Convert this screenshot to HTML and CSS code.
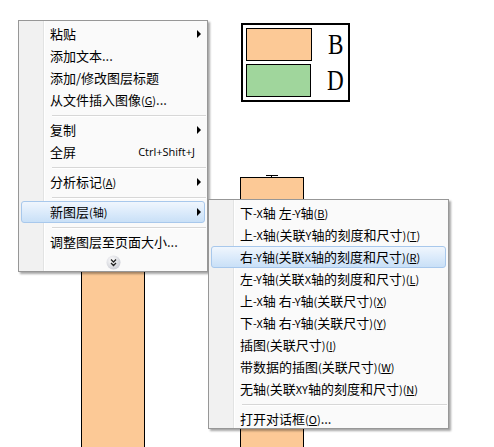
FILE: index.html
```html
<!DOCTYPE html>
<html>
<head>
<meta charset="utf-8">
<link rel="stylesheet" href="styles.css">
</head>
<body>
<div class="stage">
  <div class="legend">
    <div class="lg-row"><span class="sw sw-orange"></span><span class="lg-label">B</span></div>
    <div class="lg-row"><span class="sw sw-green"></span><span class="lg-label">D</span></div>
  </div>
  <div class="bar bar-left"></div>
  <div class="bar bar-right"><span class="errcap"></span></div>

  <div class="menu main-menu">
    <div class="item sub">粘贴<span class="arrow"></span></div>
    <div class="item">添加文本...</div>
    <div class="item">添加/修改图层标题</div>
    <div class="item">从文件插入图像<span class="acc">(<u>G</u>)</span>...</div>
    <div class="sep"></div>
    <div class="item sub">复制<span class="arrow"></span></div>
    <div class="item">全屏<span class="shortcut">Ctrl+Shift+J</span></div>
    <div class="sep"></div>
    <div class="item sub">分析标记<span class="acc">(<u>A</u>)</span><span class="arrow"></span></div>
    <div class="sep"></div>
    <div class="item sub hot">新图层<span class="acc">(轴)</span><span class="arrow"></span></div>
    <div class="sep"></div>
    <div class="item">调整图层至页面大小...</div>
    <div class="more">
      <svg width="15" height="15" viewBox="0 0 15 15">
        <defs>
          <radialGradient id="g" cx="40%" cy="35%" r="70%">
            <stop offset="0" stop-color="#ffffff"/>
            <stop offset="1" stop-color="#c9cbd3"/>
          </radialGradient>
        </defs>
        <circle cx="7.5" cy="7.5" r="7" fill="url(#g)"/>
        <path d="M5 4.5 L7.5 7 L10 4.5 M5 8 L7.5 10.5 L10 8" fill="none" stroke="#222" stroke-width="1.3"/>
      </svg>
    </div>
  </div>

  <div class="menu sub-menu">
    <div class="item">下<span class="lat">-X</span>轴 左<span class="lat">-Y</span>轴<span class="acc">(<u>B</u>)</span></div>
    <div class="item">上<span class="lat">-X</span>轴<span class="acc">(</span>关联<span class="lat">Y</span>轴的刻度和尺寸<span class="acc">)(<u>T</u>)</span></div>
    <div class="item hot">右<span class="lat">-Y</span>轴<span class="acc">(</span>关联<span class="lat">X</span>轴的刻度和尺寸<span class="acc">)(<u>R</u>)</span></div>
    <div class="item">左<span class="lat">-Y</span>轴<span class="acc">(</span>关联<span class="lat">X</span>轴的刻度和尺寸<span class="acc">)(<u>L</u>)</span></div>
    <div class="item">上<span class="lat">-X</span>轴 右<span class="lat">-Y</span>轴<span class="acc">(</span>关联尺寸<span class="acc">)(<u>X</u>)</span></div>
    <div class="item">下<span class="lat">-X</span>轴 右<span class="lat">-Y</span>轴<span class="acc">(</span>关联尺寸<span class="acc">)(<u>Y</u>)</span></div>
    <div class="item">插图<span class="acc">(</span>关联尺寸<span class="acc">)(<u>I</u>)</span></div>
    <div class="item">带数据的插图<span class="acc">(</span>关联尺寸<span class="acc">)(<u>W</u>)</span></div>
    <div class="item">无轴<span class="acc">(</span>关联<span class="lat">XY</span>轴的刻度和尺寸<span class="acc">)(<u>N</u>)</span></div>
    <div class="sep"></div>
    <div class="item">打开对话框<span class="acc">(<u>O</u>)</span>...</div>
  </div>
</div>
</body>
</html>
```
FILE: styles.css
```css
* { box-sizing: border-box; }
html, body { margin: 0; padding: 0; background: #ffffff; }
.stage {
  position: relative;
  width: 494px;
  height: 447px;
  overflow: hidden;
  font-family: "Noto Sans CJK SC", "Noto Sans", sans-serif;
}

/* chart canvas */
.legend {
  position: absolute;
  left: 241px;
  top: 23px;
  width: 109px;
  height: 79px;
  border: 2px solid #000;
  padding: 3px 0 0 3px;
  display: flex;
  flex-direction: column;
  gap: 3px;
}
.lg-row { display: flex; align-items: center; height: 33px; }
.sw { width: 66px; height: 33px; border: 1.5px solid #000; display: block; }
.sw-orange { background: #fcc996; }
.sw-green { background: #a0d69c; }
.lg-label {
  font-family: "Liberation Serif", serif;
  font-size: 29px;
  line-height: 33px;
  margin-left: 16px;
  transform: scaleX(0.8);
  transform-origin: left center;
  color: #000;
}
.bar {
  position: absolute;
  background: #fcc996;
  border: 1px solid #000;
  border-bottom: none;
}
.bar-left { left: 81px; top: 250px; width: 64px; height: 200px; }
.bar-right { left: 240px; top: 177px; width: 64px; height: 280px; }
.errcap {
  position: absolute;
  left: 25px;
  top: -3px;
  width: 12px;
  height: 3px;
  border-top: 1px solid #000;
}
.errcap::after {
  content: "";
  position: absolute;
  left: 5px;
  top: 0;
  width: 1px;
  height: 2px;
  background: #000;
}

/* menus */
.menu {
  position: absolute;
  border: 1px solid #979797;
  background: linear-gradient(to right, #f1f1f1 0, #f1f1f1 24px, #e2e3e3 24px, #e2e3e3 25px, #ffffff 25px, #ffffff 26px, #fafafa 26px);
  box-shadow: 2px 2px 2px rgba(0, 0, 0, 0.35);
  padding: 2px 0 1px;
  font-size: 13px;
  color: #000;
}
.main-menu { left: 18px; top: 20px; width: 190px; height: 252px; }
.sub-menu { left: 208px; top: 199px; width: 241px; height: 230px; z-index: 2; }

.item {
  position: relative;
  height: 22px;
  line-height: 22px;
  padding-left: 30px;
  margin: 0 2px 0 2px;
  padding-left: 28px;
  white-space: nowrap;
  display: flex;
  align-items: center;
  border: 1px solid transparent;
  border-radius: 3px;
}
.item.hot {
  background: linear-gradient(to bottom, #f0f6fd 0%, #dcebfb 50%, #c9e0f7 100%);
  border-color: #a8c8ec;
}
.acc { font-size: 11px; }
.acc u { text-decoration: underline; text-underline-offset: 1px; }
.lat { font-size: 11px; }
.arrow {
  position: absolute;
  right: 3px;
  top: 6px;
  width: 0;
  height: 0;
  border-top: 4px solid transparent;
  border-bottom: 4px solid transparent;
  border-left: 4px solid #000;
}
.shortcut {
  margin-left: auto;
  margin-right: 9px;
  font-family: "Open Sans", "Noto Sans", sans-serif;
  font-size: 11px;
}
.sep {
  height: 8px;
  margin-left: 33px;
  margin-right: 1px;
  display: flex;
  align-items: center;
}
.sep::before {
  content: "";
  display: block;
  width: 100%;
  height: 1px;
  background: #d7d7d7;
  box-shadow: 0 1px 0 #ffffff;
}
.more {
  height: 18px;
  display: flex;
  justify-content: center;
  align-items: center;
}
.more svg { display: block; }
```
